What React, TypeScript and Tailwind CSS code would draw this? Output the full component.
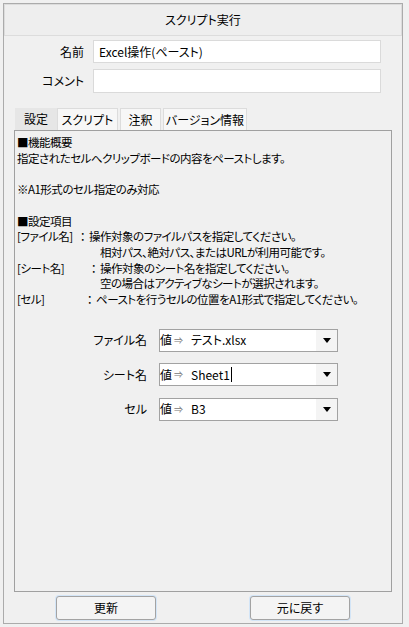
const font = "[font-family:'Noto_Sans_CJK_JP','Noto_Sans',sans-serif] [font-feature-settings:'palt']";

function Dropdown({ value, caret }: { value: string; caret?: boolean }) {
  return (
    <div className="flex h-[23px] w-[179px] items-center border border-[#a2a2a2] bg-white">
      <span className="text-[12px] leading-none">値</span>
      <span className="ml-[2px] text-[9px] leading-none text-[#777]">⇒</span>
      <span className="ml-[8px] flex items-center text-[12px] leading-none">
        {value}
        {caret && <span className="ml-[1px] inline-block h-[15px] w-px bg-black" />}
      </span>
      <div className="ml-auto flex h-full w-[21px] items-center justify-center bg-[#f4f4f4]">
        <svg width="8" height="5" viewBox="0 0 8 5">
          <path d="M0 0H8L4 5Z" fill="#000" />
        </svg>
      </div>
    </div>
  );
}

function FieldRow({ label, value, caret }: { label: string; value: string; caret?: boolean }) {
  return (
    <div className="flex items-center">
      <div className="w-[132px] text-right text-[12px]">{label}</div>
      <div className="ml-[12px]">
        <Dropdown value={value} caret={caret} />
      </div>
    </div>
  );
}

export default function App() {
  return (
    <div className={`h-[627px] w-[409px] overflow-hidden bg-[#f0f0f0] pl-[3px] pt-[3px] text-black ${font}`}>
      <div className="flex h-[621px] w-[400px] flex-col border border-[#ababab]">
        {/* タイトル */}
        <div className="flex h-[32px] items-center justify-center border border-[#dcdcdc] bg-[#eeeeee] text-[12px]">
          スクリプト実行
        </div>

        {/* 名前・コメント */}
        <div className="mt-[4px] flex items-center">
          <div className="w-[80px] text-right text-[12px]">名前</div>
          <div className="ml-[9px] flex h-[23px] w-[288px] items-center border border-[#dadada] bg-white pl-[5px] text-[12px]">
            Excel操作(ペースト)
          </div>
        </div>
        <div className="mt-[6px] flex items-center">
          <div className="w-[80px] text-right text-[12px]">コメント</div>
          <div className="ml-[9px] h-[24px] w-[288px] border border-[#dadada] bg-white" />
        </div>

        {/* タブ */}
        <div className="ml-[11px] mt-[15px] flex h-[22px] items-end text-[12px]">
          <div className="flex h-[22px] w-[42px] items-center justify-center bg-[#e6e6e6]">設定</div>
          <div className="flex h-[22px] w-[61px] items-center justify-center border border-b-0 border-[#dcdcdc] bg-[#f7f7f7]">スクリプト</div>
          <div className="ml-[2px] flex h-[22px] w-[41px] items-center justify-center border border-b-0 border-[#dcdcdc] bg-[#f7f7f7]">注釈</div>
          <div className="ml-[2px] flex h-[22px] w-[84px] items-center justify-center border border-b-0 border-[#dcdcdc] bg-[#f7f7f7]">バージョン情報</div>
        </div>

        {/* 設定パネル */}
        <div className="ml-[10px] h-[462px] w-[378px] border border-[#a0a0a0] bg-[#f0f0f0]">
          <div className="whitespace-nowrap pl-[2px] pt-[4px] text-[11.5px] leading-[15.7px] tracking-[-0.5px]">
            <div>■機能概要</div>
            <div>指定されたセルへクリップボードの内容をペーストします。</div>
            <div>&nbsp;</div>
            <div>※A1形式のセル指定のみ対応</div>
            <div>&nbsp;</div>
            <div>■設定項目</div>
            <div className="flex">
              <span className="w-[59px] shrink-0">[ファイル名]</span>
              <span className="w-[13px] shrink-0 text-center">：</span>
              <span>操作対象のファイルパスを指定してください。</span>
            </div>
            <div className="pl-[83px]">相対パス、絶対パス、またはURLが利用可能です。</div>
            <div className="flex">
              <span className="w-[70px] shrink-0">[シート名]</span>
              <span className="w-[13px] shrink-0 text-center">：</span>
              <span>操作対象のシート名を指定してください。</span>
            </div>
            <div className="pl-[83px]">空の場合はアクティブなシートが選択されます。</div>
            <div className="flex">
              <span className="w-[66px] shrink-0">[セル]</span>
              <span className="w-[13px] shrink-0 text-center">：</span>
              <span>ペーストを行うセルの位置をA1形式で指定してください。</span>
            </div>
          </div>

          <div className="mt-[21px] flex flex-col gap-[11.5px]">
            <FieldRow label="ファイル名" value="テスト.xlsx" />
            <FieldRow label="シート名" value="Sheet1" caret />
            <FieldRow label="セル" value="B3" />
          </div>
        </div>

        {/* ボタン */}
        <div className="mt-[4px] flex text-[12px]">
          <button className="ml-[52px] flex h-[24px] w-[100px] items-center justify-center rounded-[3px] border border-[#a3a3a3] bg-[#f4f4f4] shadow-[0_0_0_1px_#d3e5f7]">
            更新
          </button>
          <button className="ml-[94px] flex h-[24px] w-[100px] items-center justify-center rounded-[3px] border border-[#a3a3a3] bg-[#f4f4f4] shadow-[0_0_0_1px_#d3e5f7]">
            元に戻す
          </button>
        </div>
      </div>
    </div>
  );
}
